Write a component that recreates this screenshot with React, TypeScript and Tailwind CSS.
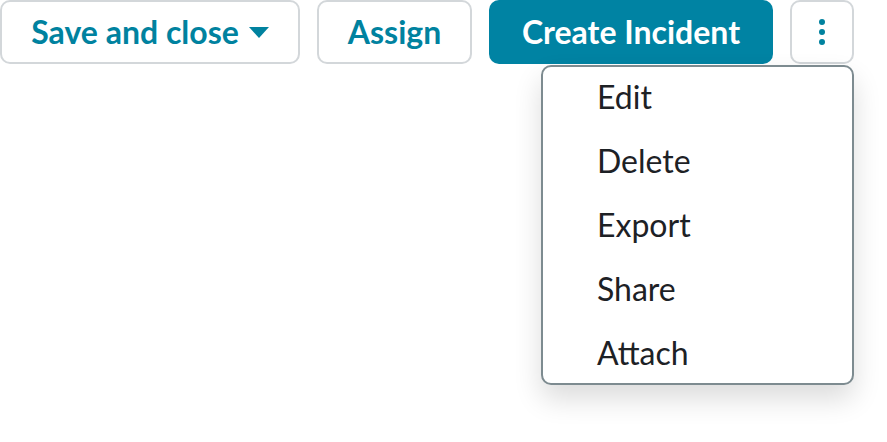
import { useState } from "react";

export default function App() {
  const [open] = useState(true);
  const items = ["Edit", "Delete", "Export", "Share", "Attach"];

  return (
    <div className="w-[887px] h-[442px] bg-white font-['Lato','Liberation_Sans',sans-serif]">
      <div className="flex items-start gap-[17px]">
        {/* Save and close with caret */}
        <button className="w-[300px] h-[64px] flex items-center justify-center gap-[10px] rounded-[10px] border-2 border-[#d3d7da] bg-white text-[32px] font-bold text-[#00829f]">
          <span>Save and close</span>
          <svg width="20" height="12" viewBox="0 0 20 12" className="mt-[2px]">
            <path d="M0 0h20L10 11z" fill="#00829f" />
          </svg>
        </button>

        <button className="w-[155px] h-[64px] flex items-center justify-center rounded-[10px] border-2 border-[#d3d7da] bg-white text-[32px] font-bold text-[#00829f]">
          Assign
        </button>

        <button className="w-[284px] h-[64px] flex items-center justify-center rounded-[10px] bg-[#0083a3] text-[32px] font-bold text-white">
          Create Incident
        </button>

        {/* Overflow menu */}
        <div className="relative">
          <button className="w-[64px] h-[64px] flex flex-col items-center justify-center gap-[4px] rounded-[10px] border-2 border-[#d3d7da] bg-white">
            <span className="w-[6px] h-[6px] rounded-full bg-[#00829f]" />
            <span className="w-[6px] h-[6px] rounded-full bg-[#00829f]" />
            <span className="w-[6px] h-[6px] rounded-full bg-[#00829f]" />
          </button>

          {open && (
            <div className="absolute right-0 top-[65px] w-[313px] h-[320px] overflow-hidden rounded-[10px] border-2 border-[#7d8b90] bg-white shadow-[0_14px_28px_rgba(0,0,0,0.14)]">
              <div className="flex flex-col -mt-[2px]">
                {items.map((item) => (
                  <div key={item} className="h-[64px] flex items-center pl-[54px] text-[32px] text-[#1d2125]">
                    {item}
                  </div>
                ))}
              </div>
            </div>
          )}
        </div>
      </div>
    </div>
  );
}
